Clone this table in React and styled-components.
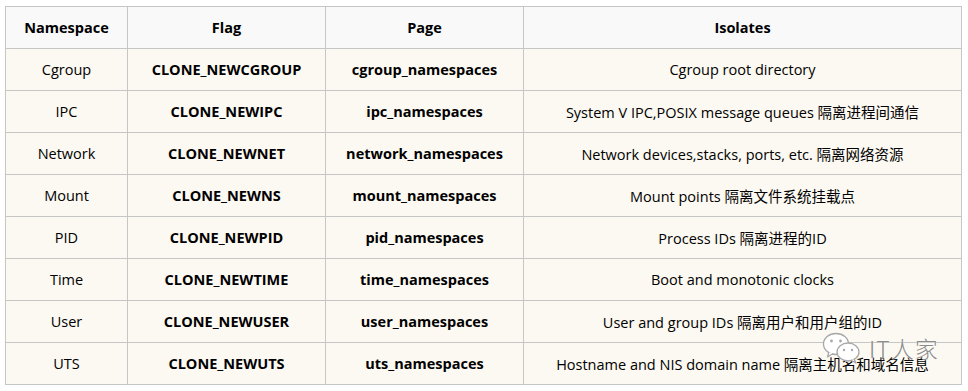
import React from 'react';
import styled, { createGlobalStyle } from 'styled-components';

const GlobalStyle = createGlobalStyle`
  html, body {
    margin: 0;
    padding: 0;
    background: #ffffff;
  }
`;

const Page = styled.div`
  position: relative;
  padding: 6px 0 0 5px;
  font-family: "Open Sans", "Noto Sans CJK SC", sans-serif;
  font-size: 14.5px;
  color: #000;
`;

const Table = styled.table`
  border-collapse: collapse;
  table-layout: fixed;
  width: 957px;
`;

const HeadCell = styled.th`
  height: 41px;
  padding: 0;
  border: 1px solid #c6c6c6;
  background: #f9f9f9;
  font-weight: 700;
  text-align: center;
  width: ${p => p.w}px;
`;

const Cell = styled.td`
  height: 41px;
  padding: 0;
  border: 1px solid #c6c6c6;
  background: #fcf9f2;
  text-align: center;
  white-space: nowrap;
  font-weight: ${p => (p.bold ? 700 : 400)};
`;

const Watermark = styled.div`
  position: absolute;
  left: 822px;
  top: 331px;
  display: flex;
  align-items: center;
  gap: 7px;
  pointer-events: none;
`;

const MarkText = styled.span`
  font-family: "Noto Sans CJK SC", sans-serif;
  font-size: 23px;
  font-weight: 300;
  color: #8c8c8c;
  letter-spacing: 1px;
  text-shadow: 0 0 2px #fff;
`;

const rows = [
  ['Cgroup', 'CLONE_NEWCGROUP', 'cgroup_namespaces', 'Cgroup root directory'],
  ['IPC', 'CLONE_NEWIPC', 'ipc_namespaces', 'System V IPC,POSIX message queues 隔离进程间通信'],
  ['Network', 'CLONE_NEWNET', 'network_namespaces', 'Network devices,stacks, ports, etc. 隔离网络资源'],
  ['Mount', 'CLONE_NEWNS', 'mount_namespaces', 'Mount points 隔离文件系统挂载点'],
  ['PID', 'CLONE_NEWPID', 'pid_namespaces', 'Process IDs 隔离进程的ID'],
  ['Time', 'CLONE_NEWTIME', 'time_namespaces', 'Boot and monotonic clocks'],
  ['User', 'CLONE_NEWUSER', 'user_namespaces', 'User and group IDs 隔离用户和用户组的ID'],
  ['UTS', 'CLONE_NEWUTS', 'uts_namespaces', 'Hostname and NIS domain name 隔离主机名和域名信息'],
];

function WeChatLogo() {
  return (
    <svg width="40" height="32" viewBox="0 0 40 32">
      <ellipse cx="14" cy="12" rx="12.5" ry="10.5" fill="#fff" stroke="#a8a8a8" strokeWidth="1.3" />
      <path d="M7 20 L5.5 25 L11 21.5" fill="#fff" stroke="#a8a8a8" strokeWidth="1.3" strokeLinejoin="round" />
      <circle cx="9.5" cy="9" r="1.4" fill="#a8a8a8" />
      <circle cx="18.5" cy="9" r="1.4" fill="#a8a8a8" />
      <ellipse cx="26" cy="20" rx="11" ry="9" fill="#fff" stroke="#a8a8a8" strokeWidth="1.3" />
      <path d="M32 27 L34 31 L29 28.3" fill="#fff" stroke="#a8a8a8" strokeWidth="1.3" strokeLinejoin="round" />
      <circle cx="22" cy="18" r="1.2" fill="#a8a8a8" />
      <circle cx="30" cy="18" r="1.2" fill="#a8a8a8" />
    </svg>
  );
}

export default function App() {
  return (
    <>
      <GlobalStyle />
      <Page>
        <Table>
          <thead>
            <tr>
              <HeadCell w={121}>Namespace</HeadCell>
              <HeadCell w={197}>Flag</HeadCell>
              <HeadCell w={197}>Page</HeadCell>
              <HeadCell w={437}>Isolates</HeadCell>
            </tr>
          </thead>
          <tbody>
            {rows.map(r => (
              <tr key={r[0]}>
                <Cell>{r[0]}</Cell>
                <Cell bold>{r[1]}</Cell>
                <Cell bold>{r[2]}</Cell>
                <Cell>{r[3]}</Cell>
              </tr>
            ))}
          </tbody>
        </Table>
        <Watermark>
          <WeChatLogo />
          <MarkText>IT人家</MarkText>
        </Watermark>
      </Page>
    </>
  );
}
